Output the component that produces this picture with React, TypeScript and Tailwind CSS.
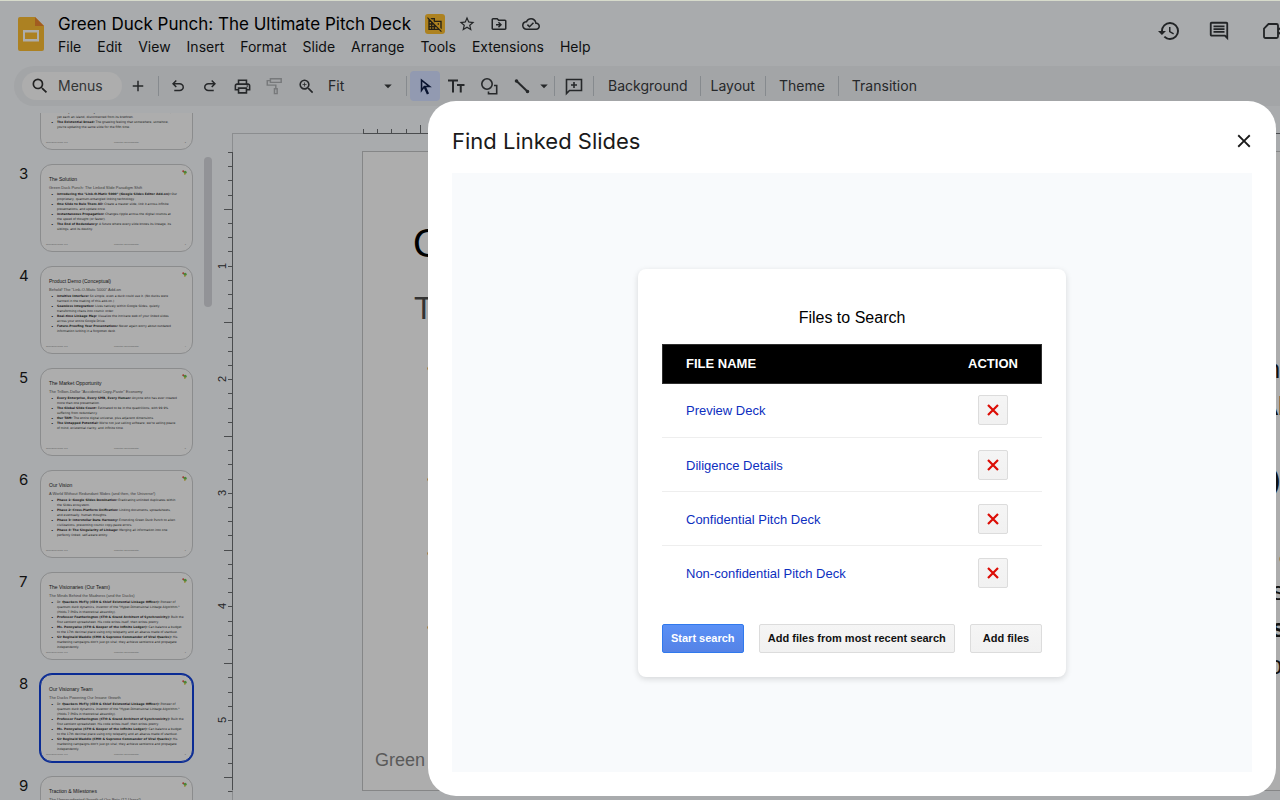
import type { ReactNode } from "react";
import {
  MdAdd,
  MdArrowDropDown,
  MdClose,
  MdOutlineCloudDone,
  MdOutlineComment,
  MdOutlinePrint,
  MdSearch,
  MdStarBorder,
  MdZoomIn,
  MdHistory,
  MdDomainDisabled,
} from "react-icons/md";

type Bullet = { bold: string; lead?: string; rest: string; more: string[] };
type Slide = { n: number; title: string; sub: string; bullets: Bullet[] };

const team: Bullet[] = [
  {
    lead: "Dr. ",
    bold: "Quackers McFly (CEO & Chief Existential Linkage Officer):",
    rest: " Pioneer of",
    more: [
      'quantum duck dynamics, inventor of the "Hyper-Dimensional Linkage Algorithm."',
      "(Holds 7 PhDs in theoretical absurdity).",
    ],
  },
  {
    bold: "Professor Featherington (CTO & Grand Architect of Synchronicity):",
    rest: " Built the",
    more: ["first sentient spreadsheet. His code writes itself, then writes poetry."],
  },
  {
    bold: "Ms. Pennywise (CFO & Keeper of the Infinite Ledger):",
    rest: " Can balance a budget",
    more: ["to the 17th decimal place using only telepathy and an abacus made of stardust."],
  },
  {
    bold: "Sir Reginald Waddle (CMO & Supreme Commander of Viral Quacks):",
    rest: " His",
    more: [
      "marketing campaigns don't just go viral; they achieve sentience and propagate",
      "independently.",
    ],
  },
];

const slides: Slide[] = [
  {
    n: 2,
    title: "The Problem",
    sub: "Duplicate Slides Everywhere",
    bullets: [
      { bold: "The Copy-Paste Spiral:", rest: " Every deck begets another deck,", more: ["and nobody knows which is current."] },
      { bold: "Version Drift:", rest: " Numbers change in one place and", more: ["linger in all of the others."] },
      { bold: "The Orphaned Slide Syndrome:", rest: " Presentations filled with identical slides,", more: ["yet each an island, disconnected from its brethren."] },
      { bold: "The Existential Dread:", rest: " The gnawing feeling that somewhere, somehow,", more: ["you're updating the same slide for the fifth time."] },
    ],
  },
  {
    n: 3,
    title: "The Solution",
    sub: "Green Duck Punch: The Linked Slide Paradigm Shift",
    bullets: [
      { bold: 'Introducing the "Link-O-Matic 5000" (Google Slides Editor Add-on):', rest: " Our", more: ["proprietary, quantum-entangled linking technology."] },
      { bold: "One Slide to Rule Them All:", rest: " Create a master slide, link it across infinite", more: ["presentations, and update once."] },
      { bold: "Instantaneous Propagation:", rest: " Changes ripple across the digital cosmos at", more: ["the speed of thought (or faster)."] },
      { bold: "The End of Redundancy:", rest: " A future where every slide knows its lineage, its", more: ["siblings, and its destiny."] },
    ],
  },
  {
    n: 4,
    title: "Product Demo (Conceptual)",
    sub: 'Behold! The "Link-O-Matic 5000" Add-on',
    bullets: [
      { bold: "Intuitive Interface:", rest: " So simple, even a duck could use it. (No ducks were", more: ["harmed in the making of this add-on.)"] },
      { bold: "Seamless Integration:", rest: " Lives natively within Google Slides, quietly", more: ["transforming chaos into cosmic order."] },
      { bold: "Real-time Linkage Map:", rest: " Visualize the intricate web of your linked slides", more: ["across your entire Google Drive."] },
      { bold: "Future-Proofing Your Presentations:", rest: " Never again worry about outdated", more: ["information lurking in a forgotten deck."] },
    ],
  },
  {
    n: 5,
    title: "The Market Opportunity",
    sub: 'The Trillion-Dollar "Accidental Copy-Paste" Economy',
    bullets: [
      { bold: "Every Enterprise, Every SMB, Every Human:", rest: " Anyone who has ever created", more: ["more than one presentation."] },
      { bold: "The Global Slide Count:", rest: " Estimated to be in the quadrillions, with 99.9%", more: ["suffering from redundancy."] },
      { bold: "Our TAM:", rest: " The entire digital universe, plus adjacent dimensions.", more: [] },
      { bold: "The Untapped Potential:", rest: " We're not just selling software; we're selling peace", more: ["of mind, existential clarity, and infinite time."] },
    ],
  },
  {
    n: 6,
    title: "Our Vision",
    sub: "A World Without Redundant Slides (and then, the Universe!)",
    bullets: [
      { bold: "Phase 1: Google Slides Domination:", rest: " Eradicating unlinked duplicates within", more: ["the Slides ecosystem."] },
      { bold: "Phase 2: Cross-Platform Unification:", rest: " Linking documents, spreadsheets,", more: ["and eventually, human thoughts."] },
      { bold: "Phase 3: Interstellar Data Harmony:", rest: " Extending Green Duck Punch to alien", more: ["civilizations, preventing cosmic copy-paste errors."] },
      { bold: "Phase 4: The Singularity of Linkage:", rest: " Merging all information into one", more: ["perfectly linked, self-aware entity."] },
    ],
  },
  { n: 7, title: "The Visionaries (Our Team)", sub: "The Minds Behind the Madness (and the Ducks)", bullets: team },
  { n: 8, title: "Our Visionary Team", sub: "The Ducks Powering Our Insane Growth", bullets: team },
  {
    n: 9,
    title: "Traction & Milestones",
    sub: "The Unprecedented Growth of Our Beta (12 Users!)",
    bullets: [],
  },
];

const files = ["Preview Deck", "Diligence Details", "Confidential Pitch Deck", "Non-confidential Pitch Deck"];

const inter = "font-['Inter','Roboto',sans-serif]";
const arial = "font-['Liberation_Sans',Arial,sans-serif]";

function Symbol({ d, className = "size-5" }: { d: string; className?: string }) {
  return (
    <svg viewBox="0 -960 960 960" fill="currentColor" className={className} aria-hidden="true">
      <path d={d} />
    </svg>
  );
}

function Stroke({ children, className = "size-5" }: { children: ReactNode; className?: string }) {
  return (
    <svg viewBox="0 0 20 20" fill="none" stroke="currentColor" strokeWidth="1.6" className={className} aria-hidden="true">
      {children}
    </svg>
  );
}

function Tool({ label, children, className = "w-8" }: { label: string; children: ReactNode; className?: string }) {
  return (
    <button aria-label={label} className={`flex h-[30px] shrink-0 items-center justify-center ${className}`}>
      {children}
    </button>
  );
}

function Sep({ className = "w-2" }: { className?: string }) {
  return (
    <div className={`flex shrink-0 justify-center ${className}`}>
      <div className="h-5 w-px bg-[#868a8e]" />
    </div>
  );
}

function SlidesLogo() {
  return (
    <svg viewBox="0 0 26 34" className="h-[34px] w-[26px]" aria-hidden="true">
      <path d="M2 0h15l9 9v23a2 2 0 0 1-2 2H2a2 2 0 0 1-2-2V2a2 2 0 0 1 2-2Z" fill="#ac8122" />
      <path d="M17 0l9 9h-9Z" fill="#a25c20" />
      <path d="M5 13h16v11.500H5Zm2 2.500v6.500h12v-6.500Z" fill="#adadad" />
    </svg>
  );
}

function Header() {
  const menus = ["File", "Edit", "View", "Insert", "Format", "Slide", "Arrange", "Tools", "Extensions", "Help"];
  return (
    <header className="flex h-[66px] shrink-0 items-start overflow-hidden border-t border-[#d7dbcb] pl-[18px]">
      <div className="pt-4">
        <SlidesLogo />
      </div>
      <div className="flex flex-col pt-3 pl-[6px]">
        <div className="flex h-[22px] items-center">
          <h1 className="px-2 text-[17px] leading-[22px] whitespace-nowrap text-black">
            Green Duck Punch: The Ultimate Pitch Deck
          </h1>
          <button aria-label="External access disabled" className="mr-[6px] ml-[6px] flex size-5 items-center justify-center rounded-[3px] bg-[#ad8220] text-[#242015]">
            <MdDomainDisabled className="size-4" />
          </button>
          <Tool label="Star"><MdStarBorder className="size-[18px]" /></Tool>
          <Tool label="Move">
            <Symbol className="size-[18px]" d="m480-280 160-160-160-160-56 56 64 64H320v80h168l-64 64 56 56ZM160-160q-33 0-56.500-23.500T80-240v-480q0-33 23.500-56.500T160-800h240l80 80h320q33 0 56.500 23.500T880-640v400q0 33-23.500 56.500T800-160H160Zm0-80h640v-400H447l-80-80H160v480Zm0 0v-480 480Z" />
          </Tool>
          <Tool label="Saved to Drive"><MdOutlineCloudDone className="size-[18px]" /></Tool>
        </div>
        <nav className="flex h-6 items-center">
          {menus.map((m) => (
            <button key={m} className="px-2 text-sm leading-5 text-[#0e0f10]">{m}</button>
          ))}
        </nav>
      </div>
      <div className="ml-auto flex h-[60px] items-center">
        <Tool label="Version history" className="w-[50px]"><MdHistory className="size-6" /></Tool>
        <Tool label="Comments" className="w-[50px]"><MdOutlineComment className="size-6 p-px" /></Tool>
        <div className="w-9 overflow-hidden pl-[18px]">
          <button aria-label="Join a call" className="block">
            <svg viewBox="0 0 28 20" className="h-5 w-7" fill="none" stroke="currentColor" strokeWidth="1.800" aria-hidden="true">
              <path d="M6.500 3h8q1.500 0 1.500 1.500v11q0 1.500-1.500 1.500h-11Q2 17 2 15.500V7.500Z" />
              <path d="M16 9l5-4v10l-5-4" />
            </svg>
          </button>
        </div>
      </div>
    </header>
  );
}

function Toolbar() {
  return (
    <div className="ml-[14px] flex h-10 shrink-0 items-center overflow-hidden rounded-l-full bg-[#a3a5a7] pl-2 text-sm text-[#26282a]">
      <button className="flex h-7 w-[100px] shrink-0 items-center gap-2 rounded-full bg-[#adadad] pl-2 text-[#333536]">
        <MdSearch className="size-5 text-[#222]" />
        Menus
      </button>
      <Tool label="New slide"><MdAdd className="size-[18px]" /></Tool>
      <Sep />
      <Tool label="Undo">
        <Symbol className="size-[18px]" d="M280-200v-80h284q63 0 109.500-40T720-420q0-60-46.500-100T564-560H312l104 104-56 56-200-200 200-200 56 56-104 104h252q97 0 166.500 63T800-420q0 94-69.500 157T564-200H280Z" />
      </Tool>
      <Tool label="Redo">
        <Symbol className="size-[18px]" d="M396-200q-97 0-166.500-63T160-420q0-94 69.500-157T396-640h252L544-744l56-56 200 200-200 200-56-56 104-104H396q-63 0-109.500 40T240-420q0 60 46.500 100T396-280h284v80H396Z" />
      </Tool>
      <Tool label="Print"><MdOutlinePrint className="size-[19px]" /></Tool>
      <Tool label="Paint format" className="w-8 text-[#77797b]">
        <Stroke className="size-[18px]">
          <path d="M6 2h12v4H6ZM6 4H2.500v5H12v4M10.500 13h3v5.500h-3Z" />
        </Stroke>
      </Tool>
      <Tool label="Zoom"><MdZoomIn className="size-[19px]" /></Tool>
      <button className="flex h-[30px] w-20 shrink-0 items-center justify-between pl-[6px] pr-[5px]">
        Fit
        <MdArrowDropDown className="size-[18px]" />
      </button>
      <Sep />
      <button aria-label="Select" className="flex size-[30px] shrink-0 items-center justify-center rounded-sm bg-[#929ab1] text-[#0a1430]">
        <Symbol className="size-[19px]" d="m320-410 79-110h170L320-716v306ZM551-80 406-392 240-160v-720l560 440H516l144 309-109 51ZM399-520Z" />
      </button>
      <Tool label="Text box">
        <Stroke className="size-5">
          <path strokeWidth="2" d="M2 4.500h10M7 4.500v12M11 9h7.500M14.750 9v7.500" />
        </Stroke>
      </Tool>
      <Tool label="Shape" className="w-[34px]">
        <Stroke className="size-5">
          <circle cx="8" cy="8" r="5.200" />
          <path d="M15 9.500h2.700v8.200H9.500V15.500" />
        </Stroke>
      </Tool>
      <Tool label="Line">
        <Stroke className="size-5">
          <path strokeWidth="2" d="M4 4.500 16 16" />
          <circle cx="4.500" cy="5" r="1" fill="currentColor" />
          <circle cx="15.500" cy="15.500" r="1" fill="currentColor" />
        </Stroke>
      </Tool>
      <Tool label="Line options" className="w-3"><MdArrowDropDown className="size-[18px] shrink-0" /></Tool>
      <Sep />
      <Tool label="Add comment">
        <Stroke className="size-5">
          <path d="M2.500 17.500V3.500h15v11h-12ZM10 6v6M7 9h6" />
        </Stroke>
      </Tool>
      <Sep className="w-[6px]" />
      <button className="px-[12px]">Background</button>
      <Sep className="w-px" />
      <button className="px-[10px]">Layout</button>
      <Sep className="w-px" />
      <button className="px-[13px]">Theme</button>
      <Sep className="w-px" />
      <button className="px-[13px]">Transition</button>
    </div>
  );
}

function Thumb({ slide, selected }: { slide: Slide; selected: boolean }) {
  return (
    <li className="flex shrink-0">
      <span className="w-10 shrink-0 pl-[19px] text-[15px] leading-5 text-[#111]">{slide.n}</span>
      <div
        className={`h-[88px] w-[153px] shrink-0 overflow-hidden rounded-[12px] border bg-[#adadad] ${arial} ${
          selected ? "border-[#0a2b94] ring-1 ring-[#0a2b94]" : "border-[#8b8c8d]"
        }`}
      >
        <div className="flex h-[10px] items-end justify-end pr-[5px]">
          <svg viewBox="0 0 6 6" className="size-[5px] shrink-0" aria-hidden="true">
            <circle cx="1.500" cy="1.500" r="1.200" fill="#9c3a30" />
            <circle cx="3.800" cy="2.700" r="1.800" fill="#4a8638" />
            <circle cx="3.400" cy="4.700" r="1" fill="#94862c" />
          </svg>
        </div>
        <div className="flex h-[67px] flex-col pl-2 whitespace-nowrap">
          <p className="pt-px text-[5px] leading-[7px] text-[#151515]">{slide.title}</p>
          <p className="pt-px text-[4px] leading-[7px] text-[#3c3c3c]">{slide.sub}</p>
          <ul className="pt-px font-['DejaVu_Sans',sans-serif] text-[3px] leading-[5px] text-[#161616]">
            {slide.bullets.map((b) => (
              <li key={b.bold} className="flex">
                <span className="w-2 shrink-0 pl-[2px] text-[4px]">•</span>
                <span>
                  {b.lead}
                  <b>{b.bold}</b>
                  {b.rest}
                  {b.more.map((m) => (
                    <span key={m} className="block">{m}</span>
                  ))}
                </span>
              </li>
            ))}
          </ul>
        </div>
        <div className="flex justify-between pr-[6px] pl-[5px] text-[2px] leading-[5px] text-[#555]">
          <span>Green Duck Punch, LLC</span>
          <span>Proprietary and Confidential</span>
          <span>{slide.n}</span>
        </div>
      </div>
    </li>
  );
}

function Filmstrip() {
  return (
    <div className="flex w-[214px] shrink-0 pt-[7px]">
      <div className="w-[204px] shrink-0 overflow-hidden">
        <ol className="-mt-[51px] flex flex-col gap-[14px]">
          {slides.map((s) => (
            <Thumb key={s.n} slide={s} selected={s.n === 8} />
          ))}
        </ol>
      </div>
      <div className="mt-11 h-[150px] w-2 shrink-0 rounded-full bg-[#929397]" />
    </div>
  );
}

const INCH = 113.6;

function VerticalRuler() {
  const ticks = Array.from({ length: 46 }, (_, i) => i);
  return (
    <svg viewBox="0 0 19 694" className="h-[694px] w-[19px] shrink-0 text-[#4a4c4e]" aria-hidden="true">
      <path d="M18.500 27V694" stroke="#8b8d8f" />
      <path d="M18.500 46V684" stroke="currentColor" />
      {ticks.map((i) => {
        const y = Math.round(46 + (i * INCH) / 8) + 0.5;
        return <path key={i} d={`M${i % 8 === 4 ? 10 : 14} ${y}H18.500`} stroke="currentColor" />;
      })}
      {[1, 2, 3, 4, 5].map((n) => (
        <text
          key={n}
          transform={`translate(12 ${Math.round(46 + n * INCH)}) rotate(-90)`}
          textAnchor="middle"
          fontSize="11"
          fill="#242526"
          fontFamily="Liberation Sans"
        >
          {n}
        </text>
      ))}
    </svg>
  );
}

function HorizontalRuler() {
  const ticks = Array.from({ length: 81 }, (_, i) => i);
  return (
    <svg className="ml-[130px] h-[9px] w-full text-[#4a4c4e]" aria-hidden="true">
      <path d="M0 8.500H1137" stroke="currentColor" />
      {ticks.map((i) => {
        const x = Math.round((i * INCH) / 8) + 0.5;
        return <path key={i} d={`M${x} ${i % 8 === 4 ? 0 : 4}V9`} stroke="currentColor" />;
      })}
    </svg>
  );
}

function Canvas() {
  return (
    <main className="flex min-w-0 grow">
      <VerticalRuler />
      <div className="min-w-0 grow overflow-hidden pt-[19px]">
        <HorizontalRuler />
        <div className="-mt-px border-t border-[#8b8d8f] pt-[17px] pl-[129px]">
          <article className={`flex h-[640px] w-[1136px] flex-col border border-[#858687] bg-[#adadad] whitespace-nowrap ${arial}`}>
            <h2 className="pt-[68px] pl-[50px] text-[40px] leading-[46px] text-black">Our Visionary Team</h2>
            <p className="pt-[23px] pl-[51px] text-[32px] leading-[38px] text-[#333]">The Ducks Powering Our Insane Growth</p>
            <ul className="pt-6 text-[25px] leading-[37px] text-[#111]">
              {team.map((b) => (
                <li key={b.bold} className="flex">
                  <span className="w-[128px] pl-16 text-[18px]">•</span>
                  <span>
                    {b.lead}
                    <b>{b.bold}</b>
                    {b.rest}
                    {b.more.map((m) => (
                      <span key={m} className="block">{m}</span>
                    ))}
                  </span>
                </li>
              ))}
            </ul>
            <p className="mt-auto pb-[18px] pl-3 text-[18px] leading-6 text-[#5a5a5a]">Green Duck Punch, LLC</p>
          </article>
        </div>
      </div>
    </main>
  );
}

const grayButton = "rounded-[2px] border border-[#dcdcdc] bg-linear-to-b from-[#f5f5f5] to-[#f1f1f1]";

function LinkedSlidesDialog() {
  return (
    <div className="absolute inset-0 flex pt-[101px] pr-1 pb-1 pl-[428px]">
      <section
        role="dialog"
        aria-labelledby="dialog-title"
        className="flex min-w-0 grow flex-col rounded-[28px] bg-white px-6 pb-6"
      >
        <div className="flex h-[72px] items-center justify-between pt-2">
          <h2 id="dialog-title" className="text-[22px] leading-8 text-[#1a1a1a]">Find Linked Slides</h2>
          <button aria-label="Close" className="-mr-1 flex size-6 items-center justify-center text-[#1a1a1a]">
            <MdClose className="size-[22px]" />
          </button>
        </div>
        <div className={`flex grow items-center justify-center bg-[#f8fafc] ${arial}`}>
          <div className="w-[428px] rounded-lg bg-white px-6 pt-9 pb-6 shadow-[0_2px_6px_rgba(0,0,0,0.14)]">
            <h3 className="pb-[13px] text-center text-base leading-[26px] text-black">Files to Search</h3>
            <table className="w-full border-collapse text-left">
              <thead>
                <tr className="bg-black text-[13px] leading-5 text-white shadow-[inset_0_0_0_1px_#2e2e2e]">
                  <th className="h-10 px-6 font-bold">FILE NAME</th>
                  <th className="w-[98px] text-center font-bold">ACTION</th>
                </tr>
              </thead>
              <tbody>
                {files.map((f) => (
                  <tr key={f} className="h-[54px] border-b border-[#eeeeee] last:border-b-0">
                    <td className="px-6">
                      <a href="#" className="text-[13px] leading-5 text-[#0d2fc0]">{f}</a>
                    </td>
                    <td>
                      <button
                        aria-label={`Remove ${f}`}
                        className={`mx-auto flex size-[30px] items-center justify-center ${grayButton}`}
                      >
                        <svg viewBox="0 0 12 12" className="size-3" stroke="#dc0d05" strokeWidth="2.200" aria-hidden="true">
                          <path d="M1 1 11 11M11 1 1 11" />
                        </svg>
                      </button>
                    </td>
                  </tr>
                ))}
              </tbody>
            </table>
            <div className="flex justify-between pt-6 text-[11px] leading-[27px] font-bold whitespace-nowrap">
              <button className="rounded-[2px] border border-[#3079ed] bg-linear-to-b from-[#5a90f6] to-[#5583e6] px-2 text-white">
                Start search
              </button>
              <button className={`px-2 text-[#111] ${grayButton}`}>Add files from most recent search</button>
              <button className={`min-w-[72px] px-2 text-[#111] ${grayButton}`}>Add files</button>
            </div>
          </div>
        </div>
      </section>
    </div>
  );
}

export default function App() {
  return (
    <div className={`relative flex h-screen min-h-[800px] flex-col overflow-hidden bg-[#a9abad] text-[#222426] ${inter}`}>
      <Header />
      <Toolbar />
      <div className="flex min-h-0 grow overflow-hidden">
        <Filmstrip />
        <Canvas />
      </div>
      <LinkedSlidesDialog />
    </div>
  );
}
